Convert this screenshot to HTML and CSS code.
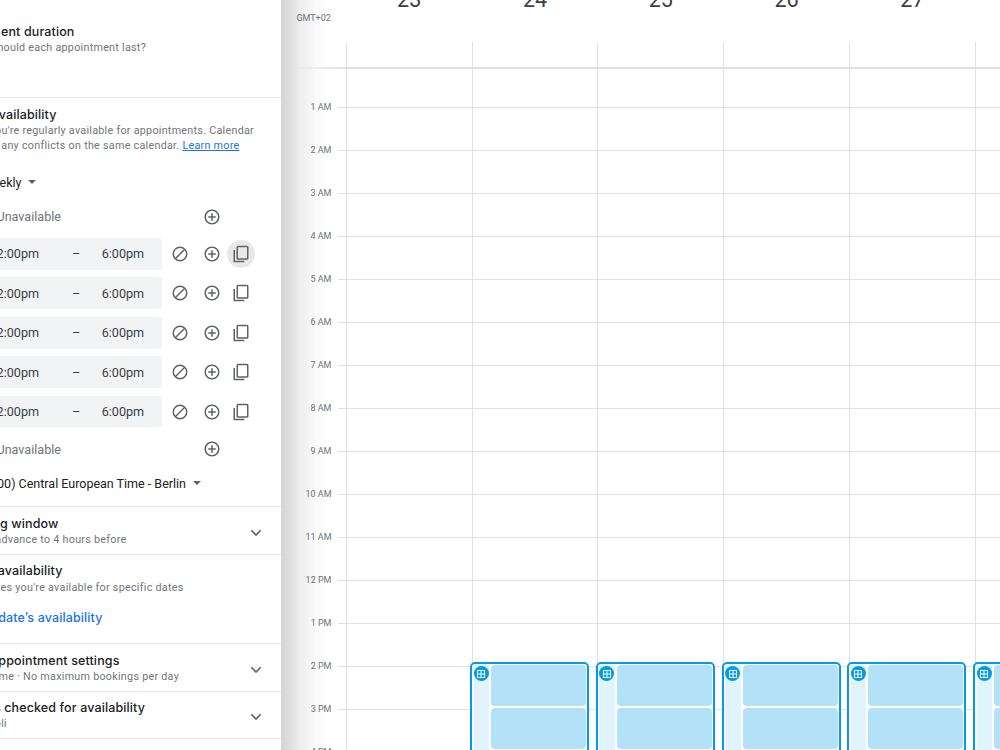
FILE: index.html
```html
<!DOCTYPE html>
<html lang="en">
<head>
    <meta charset="UTF-8">
    <meta name="viewport" content="width=device-width, initial-scale=1.0">
    <title>Appointment schedule</title>
    <link rel="stylesheet" href="styles.css">
</head>
<body>
    <svg class="defs">
        <symbol id="plus" viewBox="0 0 24 24"><path d="M13 7h-2v4H7v2h4v4h2v-4h4v-2h-4V7zm-1-5C6.48 2 2 6.48 2 12s4.48 10 10 10 10-4.48 10-10S17.52 2 12 2zm0 18c-4.41 0-8-3.59-8-8s3.59-8 8-8 8 3.59 8 8-3.59 8-8 8z"/></symbol>
        <symbol id="block" viewBox="0 0 24 24"><circle cx="12" cy="12" r="9" fill="none" stroke="currentColor" stroke-width="2"/><path d="M6 18L18 6" stroke="currentColor" stroke-width="2"/></symbol>
        <symbol id="copy" viewBox="0 0 24 24"><path d="M3 6.500v15.500H16.500" fill="none" stroke="currentColor" stroke-width="2"/><rect x="7" y="2" width="14" height="16.500" rx="1" fill="none" stroke="currentColor" stroke-width="2"/></symbol>
        <symbol id="chevron" viewBox="0 0 12 8"><path d="M1.300 1.300L6 6l4.700-4.700" fill="none" stroke="currentColor" stroke-width="1.600"/></symbol>
        <symbol id="grid" viewBox="0 0 8 8"><path d="M.5.500h7v7h-7zM4 .5v7M.5 4h7" fill="none" stroke="#fff" stroke-width="1"/></symbol>
    </svg>

    <div class="app">
        <aside class="panel">
            <section class="section duration">
                <h2 class="w-duration">ent duration</h2>
                <p class="w-last">hould each appointment last?</p>
            </section>

            <section class="section general">
                <h2 class="w-general">vailability</h2>
                <p class="w-regular">ou're regularly available for appointments. Calendar</p>
                <p class="w-conflicts">any conflicts on the same calendar. <a href="#">Learn more</a></p>
                <div class="select repeat"><span class="w-weekly">ekly</span><i class="caret"></i></div>

                <div class="day off">
                    <span class="w-off">Unavailable</span>
                    <svg class="icon"><use href="#plus"/></svg>
                </div>
                <div class="day">
                    <div class="times"><span class="from">2:00pm</span><span class="dash">–</span><span>6:00pm</span></div>
                    <svg class="icon"><use href="#block"/></svg>
                    <svg class="icon"><use href="#plus"/></svg>
                    <span class="copy active"><svg class="icon"><use href="#copy"/></svg></span>
                </div>
                <div class="day">
                    <div class="times"><span class="from">2:00pm</span><span class="dash">–</span><span>6:00pm</span></div>
                    <svg class="icon"><use href="#block"/></svg>
                    <svg class="icon"><use href="#plus"/></svg>
                    <span class="copy"><svg class="icon"><use href="#copy"/></svg></span>
                </div>
                <div class="day">
                    <div class="times"><span class="from">2:00pm</span><span class="dash">–</span><span>6:00pm</span></div>
                    <svg class="icon"><use href="#block"/></svg>
                    <svg class="icon"><use href="#plus"/></svg>
                    <span class="copy"><svg class="icon"><use href="#copy"/></svg></span>
                </div>
                <div class="day">
                    <div class="times"><span class="from">2:00pm</span><span class="dash">–</span><span>6:00pm</span></div>
                    <svg class="icon"><use href="#block"/></svg>
                    <svg class="icon"><use href="#plus"/></svg>
                    <span class="copy"><svg class="icon"><use href="#copy"/></svg></span>
                </div>
                <div class="day">
                    <div class="times"><span class="from">2:00pm</span><span class="dash">–</span><span>6:00pm</span></div>
                    <svg class="icon"><use href="#block"/></svg>
                    <svg class="icon"><use href="#plus"/></svg>
                    <span class="copy"><svg class="icon"><use href="#copy"/></svg></span>
                </div>
                <div class="day off last">
                    <span class="w-off">Unavailable</span>
                    <svg class="icon"><use href="#plus"/></svg>
                </div>
                <div class="select zone"><span class="w-zone">00) Central European Time - Berlin</span><i class="caret"></i></div>
            </section>

            <section class="section fold">
                <div>
                    <h2 class="w-window">g window</h2>
                    <p class="w-advance">advance to 4 hours before</p>
                </div>
                <svg class="chevron"><use href="#chevron"/></svg>
            </section>

            <section class="section adjusted">
                <h2 class="w-adjusted">availability</h2>
                <p class="w-specific">es you're available for specific dates</p>
                <a class="change w-change" href="#">date’s availability</a>
            </section>

            <section class="section fold">
                <div>
                    <h2 class="w-settings">ppointment settings</h2>
                    <p class="w-maximum">me · No maximum bookings per day</p>
                </div>
                <svg class="chevron"><use href="#chevron"/></svg>
            </section>

            <section class="section fold">
                <div>
                    <h2 class="w-checked">s checked for availability</h2>
                    <p class="w-name">oli</p>
                </div>
                <svg class="chevron"><use href="#chevron"/></svg>
            </section>
        </aside>

        <main class="calendar">
            <header class="head">
                <span class="gmt">GMT+02</span>
                <div class="dates"><b>23</b><b>24</b><b>25</b><b>26</b><b>27</b></div>
            </header>
            <div class="allday"></div>
            <div class="hours">
                <div class="hour">1 AM</div>
                <div class="hour">2 AM</div>
                <div class="hour">3 AM</div>
                <div class="hour">4 AM</div>
                <div class="hour">5 AM</div>
                <div class="hour">6 AM</div>
                <div class="hour">7 AM</div>
                <div class="hour">8 AM</div>
                <div class="hour">9 AM</div>
                <div class="hour">10 AM</div>
                <div class="hour">11 AM</div>
                <div class="hour">12 PM</div>
                <div class="hour">1 PM</div>
                <div class="hour">2 PM</div>
                <div class="hour">3 PM</div>
                <div class="hour">4 PM</div>
            </div>
            <div class="columns">
                <div class="column"></div>
                <div class="column">
                    <div class="event"><div class="strip"><span class="badge"><svg><use href="#grid"/></svg></span></div><div class="slots"><i></i><i></i><i></i></div></div>
                </div>
                <div class="column">
                    <div class="event"><div class="strip"><span class="badge"><svg><use href="#grid"/></svg></span></div><div class="slots"><i></i><i></i><i></i></div></div>
                </div>
                <div class="column">
                    <div class="event"><div class="strip"><span class="badge"><svg><use href="#grid"/></svg></span></div><div class="slots"><i></i><i></i><i></i></div></div>
                </div>
                <div class="column">
                    <div class="event"><div class="strip"><span class="badge"><svg><use href="#grid"/></svg></span></div><div class="slots"><i></i><i></i><i></i></div></div>
                </div>
                <div class="column">
                    <div class="event"><div class="strip"><span class="badge"><svg><use href="#grid"/></svg></span></div><div class="slots"><i></i><i></i><i></i></div></div>
                </div>
            </div>
            <div class="shade"></div>
        </main>
    </div>
</body>
</html>
```
FILE: styles.css
```css
* {
    box-sizing: border-box;
}
body {
    margin: 0;
    overflow: hidden;
    background: #fff;
    color: #3c4043;
    font-family: Roboto, Arial, sans-serif;
}
h2, p {
    margin: 0;
}
.defs {
    display: none;
}
.app {
    display: flex;
    width: 1000px;
    height: 750px;
    overflow: hidden;
}

/* side panel, its left part is scrolled out of view */
.panel {
    width: 281.4px;
    flex: none;
    overflow: hidden;
}
.section {
    border-bottom: 1px solid #e8eaed;
}
/* text ends at the given width and runs out to the left */
h2, p, .change, .select span, .w-off, .from {
    display: flex;
    justify-content: flex-end;
    white-space: pre;
}
h2, .change {
    font: 500 12.5px/16px Inter, sans-serif;
    letter-spacing: 0.12px;
    color: #202124;
}
p {
    font-size: 10.75px;
    line-height: 14.5px;
    letter-spacing: 0.27px;
    color: #70757a;
}
a {
    color: #1a73e8;
}
.duration {
    height: 98px;
    padding-top: 23.5px;
}
.duration p {
    padding-top: 1.5px;
}
.general {
    height: 409px;
    padding-top: 9px;
}
.general h2 {
    margin-bottom: 1px;
}
.select {
    display: flex;
    align-items: center;
    height: 20px;
    font-size: 12.5px;
    color: #202124;
}
.caret {
    margin-left: 6.5px;
    border: 4px solid transparent;
    border-top: 4px solid #5f6368;
    border-bottom: 0;
}
.repeat {
    margin: 19px 0 8.5px;
}
.day {
    display: flex;
    align-items: center;
    height: 31.9px;
    margin-bottom: 7.5px;
    font-size: 12.6px;
}
.day.off {
    height: 32px;
    margin-bottom: 5.5px;
    color: #70757a;
}
.day.last {
    margin-top: -1.5px;
    margin-bottom: 8px;
}
.times {
    display: flex;
    align-items: center;
    width: 162px;
    height: 100%;
    margin-right: 9.3px;
    border-radius: 0 3px 3px 0;
    background: #f1f3f4;
}
.from {
    width: 39px;
}
.dash {
    width: 8px;
    margin: 0 21.7px 0 33px;
}
.icon {
    flex: none;
    width: 18px;
    height: 18px;
    margin-right: 14px;
    color: #5f6368;
    fill: #5f6368;
}
.off .icon {
    margin-left: 142.3px;
}
.copy {
    display: flex;
    align-items: center;
    justify-content: center;
    width: 28px;
    height: 28px;
    margin-left: -8.3px;
    border-radius: 50%;
}
.copy .icon {
    margin: 0;
}
.active {
    background: #e8e8e8;
}
.fold {
    display: flex;
    align-items: flex-start;
    justify-content: space-between;
    height: 47.5px;
    padding: 8.5px 19.4px 0 0;
}
.chevron {
    width: 12px;
    height: 8px;
    margin-top: 13px;
    color: #5f6368;
}
.adjusted {
    height: 89.5px;
    padding-top: 8.5px;
}
.change {
    margin-top: 15px;
    color: #1a73e8;
    text-decoration: none;
}
.fold p {
    padding-top: 1px;
}
.adjusted p {
    padding-top: 1.5px;
}

.w-duration { width: 74.5px; }
.w-last { width: 146px; }
.w-general { width: 56.5px; }
.w-regular { width: 254px; }
.w-conflicts { width: 239.5px; }
.w-weekly { width: 21.5px; }
.w-off { width: 61px; }
.w-zone { width: 186px; }
.w-window { width: 58.5px; }
.w-advance { width: 126.5px; }
.w-adjusted { width: 62.5px; }
.w-specific { width: 183.5px; }
.w-change { width: 102.5px; }
.w-settings { width: 119.5px; }
.w-maximum { width: 179px; }
.w-checked { width: 145px; }
.w-name { width: 7px; }

/* calendar */
.calendar {
    display: grid;
    grid-template-columns: 64.4px 655px;
    grid-template-rows: 42px 27px 681px;
    width: 718.6px;
    overflow: hidden;
}
.head {
    display: flex;
    grid-area: 1 / 1 / 2 / 3;
}
.gmt {
    flex: none;
    width: 64.4px;
    padding: 11.5px 0 0 15px;
    font-size: 9px;
    line-height: 12px;
    color: #70757a;
}
.dates {
    display: flex;
    margin-top: -12px;
}
.dates b {
    width: 125.8px;
    padding-left: 1px;
    font-size: 21.5px;
    font-weight: 400;
    line-height: 24px;
    text-align: center;
}
.allday {
    grid-area: 2 / 1 / 3 / 3;
    margin-left: 10px;
    background: linear-gradient(to right, transparent, #e0e1e3 50px) bottom / 100% 2px no-repeat;
}
.hours {
    grid-area: 3 / 1 / 4 / 3;
    padding-top: 16px;
}
.hour {
    display: flex;
    align-items: center;
    justify-content: flex-end;
    height: 42.97px;
    padding: 1.4px 669.3px 0 0;
    background: linear-gradient(#dfe1e4, #dfe1e4) 57px 22px / 100% 1px no-repeat;
    font-size: 9px;
    white-space: nowrap;
    color: #70757a;
}
.columns {
    display: flex;
    grid-area: 2 / 2 / 4 / 3;
}
.column {
    flex: none;
    width: 125.8px;
    padding-top: 620px;
    border-left: 1px solid #dfe1e4;
}
.event {
    display: flex;
    gap: 2px;
    width: 119px;
    height: 130px;
    margin-left: -2.5px;
    padding: 1px 1px 1px 1.5px;
    border: 2px solid #039be5;
    border-radius: 5px;
    background: #fff;
}
.strip {
    width: 15.5px;
    background: #e1f3fd;
}
.badge {
    display: flex;
    align-items: center;
    justify-content: center;
    width: 15px;
    height: 15px;
    margin: 1px 0 0 0;
    border-radius: 50%;
    background: #039be5;
}
.badge svg {
    width: 8px;
    height: 8px;
}
.slots {
    flex: 1;
}
.slots i {
    display: block;
    height: 41px;
    margin-bottom: 2px;
    border-radius: 4px;
    background: #b3e1f7;
}
.shade {
    grid-area: 1 / 1 / 4 / 2;
    width: 50px;
    z-index: 1;
    background: linear-gradient(to right, rgba(0, 0, 0, 0.17), rgba(0, 0, 0, 0.12) 20%, rgba(0, 0, 0, 0.065) 40%, rgba(0, 0, 0, 0.02) 70%, transparent);
}
```
